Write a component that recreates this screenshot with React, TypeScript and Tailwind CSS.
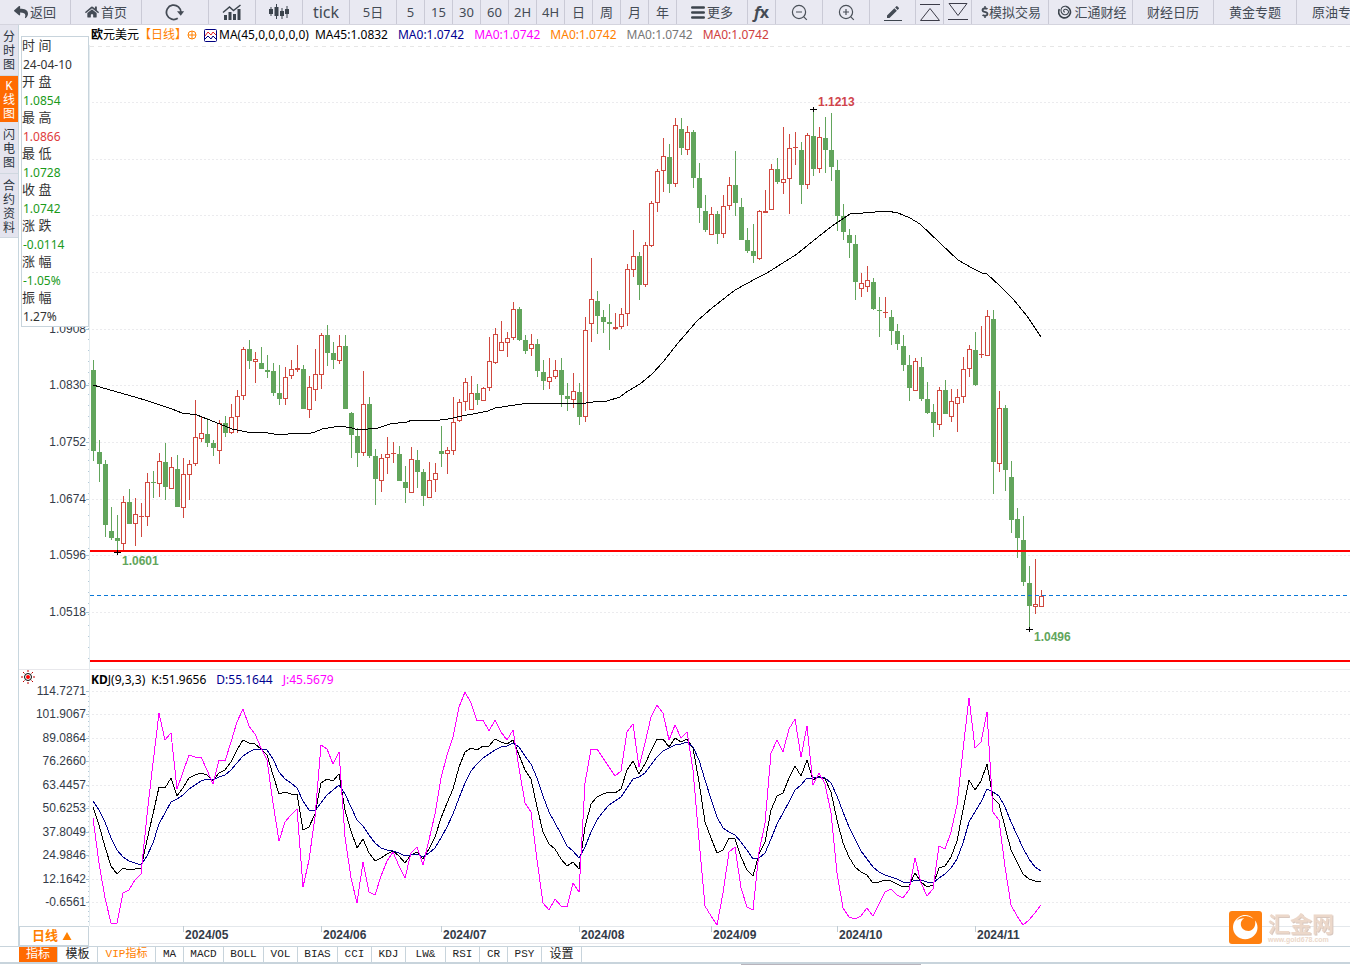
import React, { useState } from "react";
import { FaReply, FaHome, FaDollarSign } from "react-icons/fa";
import { MdEdit } from "react-icons/md";

// [rising, high, body top, body bottom, low]
type Candle = [number, number, number, number, number];

const STEP = 6;
const FIRST_X = 93;

const candles: Candle[] = [
  [0, 360, 370, 451, 461], [0, 440, 452, 464, 482], [0, 460, 464, 525, 537], [0, 507, 531, 538, 540],
  [0, 515, 538, 541, 552], [1, 496, 502, 544, 550], [0, 489, 502, 524, 524], [1, 498, 514, 524, 546],
  [1, 503, 516, 517, 537], [1, 473, 482, 517, 526], [0, 471, 482, 483, 498], [1, 453, 461, 484, 497],
  [0, 443, 462, 487, 500], [1, 457, 467, 489, 489], [0, 455, 469, 507, 507], [1, 458, 474, 508, 518],
  [1, 460, 464, 475, 500], [1, 400, 437, 464, 466], [1, 416, 433, 439, 442], [0, 418, 434, 443, 447],
  [0, 440, 443, 448, 456], [1, 420, 423, 451, 464], [0, 416, 423, 433, 437], [1, 404, 417, 433, 434],
  [1, 390, 396, 417, 433], [1, 347, 349, 396, 400], [0, 340, 349, 361, 369], [1, 352, 359, 362, 383],
  [0, 347, 363, 369, 369], [0, 355, 370, 372, 378], [0, 363, 371, 393, 396], [0, 365, 393, 399, 405],
  [1, 367, 377, 399, 405], [1, 360, 369, 376, 379], [1, 345, 368, 370, 372], [0, 365, 369, 409, 409],
  [1, 376, 387, 410, 418], [1, 349, 374, 390, 401], [1, 333, 335, 375, 389], [0, 325, 335, 353, 366],
  [0, 342, 353, 360, 369], [1, 335, 346, 361, 364], [0, 335, 346, 409, 409], [0, 412, 413, 435, 458],
  [0, 428, 436, 453, 467], [1, 371, 404, 453, 456], [0, 397, 404, 456, 458], [0, 449, 456, 479, 505],
  [1, 454, 458, 481, 492], [1, 437, 454, 458, 474], [1, 442, 453, 454, 463], [0, 446, 454, 481, 481],
  [0, 466, 482, 488, 503], [1, 447, 459, 493, 493], [0, 450, 460, 472, 488], [0, 469, 472, 496, 506],
  [1, 462, 480, 498, 498], [1, 463, 473, 480, 492], [0, 426, 451, 454, 467], [1, 447, 450, 454, 474],
  [1, 397, 422, 451, 455], [1, 399, 402, 421, 422], [1, 378, 382, 402, 411], [1, 376, 393, 410, 410],
  [0, 384, 393, 400, 405], [1, 387, 388, 401, 401], [1, 337, 361, 388, 391], [1, 328, 334, 363, 364],
  [1, 321, 342, 351, 351], [1, 332, 338, 343, 357], [1, 302, 309, 338, 340], [0, 307, 309, 340, 341],
  [0, 335, 340, 351, 354], [1, 334, 344, 349, 356], [0, 339, 344, 371, 377], [0, 360, 372, 381, 390],
  [1, 358, 377, 382, 389], [1, 360, 370, 377, 379], [0, 358, 370, 395, 407], [0, 383, 396, 399, 411],
  [1, 373, 391, 400, 408], [0, 383, 392, 417, 425], [1, 317, 330, 417, 422], [1, 258, 299, 324, 342],
  [0, 291, 301, 316, 334], [0, 310, 317, 322, 333], [0, 304, 322, 324, 350], [1, 313, 327, 329, 330],
  [1, 308, 314, 327, 329], [1, 264, 269, 314, 326], [1, 230, 256, 270, 277], [0, 252, 256, 285, 300],
  [1, 242, 245, 285, 287], [1, 201, 203, 246, 247], [1, 169, 171, 203, 212], [1, 138, 156, 171, 192],
  [0, 144, 157, 184, 193], [1, 118, 125, 184, 187], [0, 118, 129, 148, 155], [1, 126, 132, 150, 155],
  [0, 130, 132, 178, 188], [0, 163, 178, 208, 223], [0, 195, 211, 230, 232], [1, 207, 214, 235, 235],
  [0, 211, 214, 234, 244], [1, 195, 206, 234, 238], [1, 177, 185, 206, 210], [0, 151, 185, 203, 216],
  [0, 198, 207, 240, 240], [0, 228, 240, 251, 253], [0, 224, 251, 256, 263], [1, 210, 211, 259, 260],
  [1, 190, 211, 213, 213], [1, 164, 169, 210, 210], [0, 158, 169, 182, 184], [1, 127, 179, 183, 194],
  [1, 134, 148, 179, 214], [1, 132, 147, 148, 165], [0, 142, 150, 185, 204], [1, 133, 135, 185, 189],
  [0, 109, 136, 169, 176], [1, 127, 137, 169, 173], [0, 117, 138, 150, 173], [0, 113, 150, 167, 181],
  [0, 160, 170, 216, 231], [0, 204, 216, 232, 240], [0, 229, 235, 243, 258], [0, 235, 244, 282, 300],
  [1, 273, 283, 289, 297], [1, 266, 280, 287, 292], [0, 278, 282, 309, 310], [0, 297, 310, 311, 337],
  [1, 297, 312, 313, 318], [0, 310, 317, 331, 345], [0, 324, 331, 344, 350], [0, 335, 346, 365, 371],
  [0, 355, 365, 388, 401], [1, 358, 361, 391, 391], [0, 357, 367, 399, 401], [0, 382, 399, 413, 414],
  [0, 404, 412, 423, 437], [1, 387, 390, 425, 430], [0, 380, 390, 414, 414], [1, 389, 401, 417, 422],
  [1, 389, 397, 404, 432], [1, 357, 369, 397, 403], [1, 345, 349, 369, 377], [0, 332, 350, 385, 386],
  [1, 326, 354, 355, 358], [1, 310, 316, 356, 356], [0, 310, 319, 462, 494], [1, 391, 408, 464, 472],
  [0, 405, 408, 470, 491], [0, 461, 477, 520, 533], [0, 508, 519, 538, 558], [0, 516, 540, 582, 586],
  [0, 566, 583, 606, 629], [1, 559, 604, 607, 614], [1, 590, 596, 607, 607],
];

const ma45 =
  "93,385 100,387 117,392 135,397 148,401 172,409 182,413 197,415 207,419 220,424 232,429 247,432 268,433 280,435 297,433 307,434 315,432 322,429 340,426 352,428 358,430 368,429 378,428 390,424 407,422 412,420 425,420 433,421 448,419 462,416 473,414 488,411 495,408 515,405 530,403 563,403 568,404 573,403 580,404 593,402 607,401 620,397 628,391 640,384 652,374 663,362 678,343 697,321 712,308 735,290 757,278 767,273 797,254 813,241 832,226 850,214 863,213 887,211 898,213 910,218 920,224 940,243 958,260 972,268 982,273 987,274 1000,286 1013,299 1027,316 1041,337";

const kLine = [
  807, 825, 847, 866, 874, 868, 870, 869, 868, 840, 814, 787, 788, 778, 796, 788, 778, 775, 773, 775, 781, 773, 770, 762,
  750, 740, 743, 744, 749, 755, 775, 794, 792, 794, 794, 830, 827, 814, 783, 779, 781, 774, 810, 831, 848, 839, 853, 861,
  858, 854, 851, 856, 863, 855, 852, 859, 849, 837, 818, 803, 789, 767, 752, 748, 750, 746, 746, 739, 742, 744, 740, 755,
  770, 779, 807, 832, 844, 849, 859, 866, 862, 869, 827, 804, 797, 794, 792, 793, 789, 770, 761, 774, 764, 751, 739, 739,
  747, 738, 742, 739, 748, 782, 822, 838, 853, 850, 838, 839, 857, 870, 876, 854, 842, 810, 796, 793, 778, 766, 776, 760,
  780, 776, 779, 792, 820, 843, 857, 867, 872, 875, 883, 882, 880, 881, 884, 887, 886, 873, 882, 887, 885, 868, 866, 857,
  841, 810, 780, 790, 781, 764, 798, 804, 827, 850, 862, 874, 879, 881, 881,
];

const dLine = [
  801, 810, 822, 838, 850, 857, 861, 863, 865, 856, 843, 824, 813, 802, 799, 795, 789, 785, 781, 779, 780, 777, 775, 770,
  763, 756, 752, 749, 749, 750, 759, 772, 779, 783, 788, 801, 810, 811, 803, 795, 790, 785, 794, 807, 820, 826, 835, 843,
  848, 850, 851, 853, 856, 855, 854, 857, 853, 848, 838, 827, 814, 798, 783, 771, 764, 758, 754, 750, 747, 746, 743, 747,
  756, 764, 778, 796, 812, 823, 834, 846, 851, 858, 847, 832, 820, 812, 805, 801, 797, 788, 779, 777, 773, 765, 757, 751,
  748, 745, 744, 742, 747, 760, 780, 799, 817, 828, 832, 835, 842, 850, 859, 858, 853, 839, 824, 813, 802, 790, 785, 778,
  778, 777, 778, 783, 796, 812, 827, 839, 851, 859, 867, 872, 875, 877, 879, 882, 883, 880, 880, 882, 883, 878, 874, 868,
  859, 843, 822, 812, 802, 789, 792, 796, 807, 822, 835, 848, 859, 867, 871,
];

const jLine = [
  818, 863, 898, 923, 923, 893, 890, 880, 874, 815, 763, 713, 740, 733, 789, 772, 755, 757, 757, 770, 784, 760, 761, 742,
  722, 709, 726, 734, 748, 760, 803, 841, 822, 815, 809, 887, 860, 817, 745, 749, 764, 752, 837, 878, 903, 862, 892, 895,
  876, 861, 852, 866, 878, 853, 847, 865, 840, 814, 778, 755, 737, 707, 692, 703, 721, 720, 731, 720, 732, 740, 730, 768,
  803, 812, 860, 903, 910, 899, 906, 907, 883, 892, 783, 749, 749, 758, 767, 776, 771, 732, 724, 767, 743, 717, 705, 713,
  740, 725, 738, 732, 770, 840, 906, 916, 925, 893, 852, 847, 888, 907, 910, 852, 823, 753, 740, 752, 729, 719, 757, 726,
  785, 773, 784, 813, 873, 908, 917, 919, 916, 908, 916, 904, 892, 889, 895, 898, 890, 858, 883, 896, 889, 846, 849, 832,
  805, 750, 698, 748, 742, 712, 812, 820, 867, 905, 916, 925, 920, 913, 905,
];

const priceTicks: [number, string][] = [
  [102, ""], [159, ""], [215, ""], [272, ""], [329, "1.0908"], [385, "1.0830"],
  [442, "1.0752"], [499, "1.0674"], [555, "1.0596"], [612, "1.0518"],
];

const kdjTicks: [number, string][] = [
  [691, "114.7271"], [714, "101.9067"], [738, "89.0864"], [761, "76.2660"], [785, "63.4457"],
  [808, "50.6253"], [832, "37.8049"], [855, "24.9846"], [879, "12.1642"], [902, "-0.6561"],
];

const months: [number, string][] = [
  [183, "2024/05"], [321, "2024/06"], [441, "2024/07"], [579, "2024/08"],
  [711, "2024/09"], [837, "2024/10"], [975, "2024/11"],
];

const quote = [
  { label: "时 间", value: "24-04-10", color: "text-[#333]" },
  { label: "开 盘", value: "1.0854", color: "text-[#1a9a1a]" },
  { label: "最 高", value: "1.0866", color: "text-[#e03c3c]" },
  { label: "最 低", value: "1.0728", color: "text-[#1a9a1a]" },
  { label: "收 盘", value: "1.0742", color: "text-[#1a9a1a]" },
  { label: "涨 跌", value: "-0.0114", color: "text-[#1a9a1a]" },
  { label: "涨 幅", value: "-1.05%", color: "text-[#1a9a1a]" },
  { label: "振 幅", value: "1.27%", color: "text-[#333]" },
];

const sideTabs = [
  { name: "分时图", height: "h-[51px]" },
  { name: "K线图", height: "h-[46px]" },
  { name: "闪电图", height: "h-[52px]" },
  { name: "合约资料", height: "h-16" },
];

const indicatorTabs = [
  { name: "指标", width: "w-[39px]" },
  { name: "模板", width: "w-10" },
  { name: "VIP指标", width: "w-[58px]" },
  { name: "MA", width: "w-7" },
  { name: "MACD", width: "w-10" },
  { name: "BOLL", width: "w-10" },
  { name: "VOL", width: "w-[34px]" },
  { name: "BIAS", width: "w-10" },
  { name: "CCI", width: "w-[34px]" },
  { name: "KDJ", width: "w-[34px]" },
  { name: "LW&", width: "w-10" },
  { name: "RSI", width: "w-[34px]" },
  { name: "CR", width: "w-7" },
  { name: "PSY", width: "w-[34px]" },
  { name: "设置", width: "w-10" },
];

const toPoints = (values: number[]) => values.map((y, i) => `${FIRST_X + i * STEP},${y}`).join(" ");

//1 Toolbar icons
const RefreshIcon = () => (
  <svg width="20" height="18" viewBox="0 0 18 16" fill="none" stroke="#444b55" strokeWidth="1.6">
    <path d="M11.5 13.6A6.5 6.5 0 1 1 14.3 8.5" />
    <path d="M10.8 7.4h6.4L14.2 11.4z" fill="#444b55" stroke="none" />
  </svg>
);

const TrendIcon = () => (
  <svg width="20" height="16" viewBox="0 0 20 16" fill="#3c444d">
    <path d="M2 11h3v5H2zM6.500 8h3v8h-3zM11 10h3v6h-3zM15.500 5h3v11h-3z" />
    <path d="M1 8.500 7.500 3l4 3.500L18.500 1" fill="none" stroke="#3c444d" strokeWidth="1.500" />
  </svg>
);

const CandleIcon = () => (
  <svg width="22" height="16" viewBox="0 0 22 16" fill="#3c444d">
    <path d="M1 5h4v5H1zM6.500 3h4v9h-4zM12 7h4v5h-4zM17 5h4v5h-4z" />
    <path d="M3 3v9M8.500 0v15M14 4v11M19 2v12" stroke="#3c444d" strokeWidth="1" />
  </svg>
);

const MenuIcon = () => (
  <svg width="14" height="13" viewBox="0 0 14 13" fill="none" stroke="#3c444d" strokeWidth="2.400" strokeLinecap="round">
    <path d="M1.200 1.500h11.600M1.200 6.500h11.600M1.200 11.500h11.600" />
  </svg>
);

const ZoomIcon = ({ plus }: { plus?: boolean }) => (
  <svg width="17" height="17" viewBox="0 0 17 17" fill="none" stroke="#4a5058" strokeWidth="1.200">
    <circle cx="8" cy="8" r="6.600" />
    <path d="M5 8h6M12.800 12.800l3 3" />
    {plus && <path d="M8 5v6" />}
  </svg>
);

const CollapseIcon = ({ down }: { down?: boolean }) => (
  <svg width="20" height="18" viewBox="0 0 20 18" fill="none" stroke="#3c3c48" strokeWidth="1">
    {down ? <path d="M1 .500h18L10 12.500zM0 16.500h20" /> : <path d="M0 1.500h20M10 5.500l9.500 12H.500z" />}
  </svg>
);

const SwirlIcon = () => (
  <svg width="14" height="14" viewBox="0 0 15 15" fill="none" stroke="#3c444d">
    <path d="M1.500 4.500A6.300 6.300 0 1 0 8 1.300" strokeWidth="1.800" />
    <path d="M8 1.300C4 1 2.500 4.500 3.500 7.500S8.500 11.500 10.500 9.300 10.500 4.800 8 4.600 5.500 7 7.300 7.800" strokeWidth="1.100" />
  </svg>
);

const toolbar: { id: string; width: string; content: React.ReactNode }[] = [
  { id: "返回", width: "w-[71px]", content: <><FaReply size={14} />返回</> },
  { id: "首页", width: "w-[71px]", content: <><FaHome size={14} />首页</> },
  { id: "刷新", width: "w-[67px]", content: <RefreshIcon /> },
  { id: "走势", width: "w-[47px]", content: <TrendIcon /> },
  { id: "K线", width: "w-[47px]", content: <CandleIcon /> },
  { id: "tick", width: "w-[47px]", content: <span className="text-base">tick</span> },
  { id: "5日", width: "w-[47px]", content: "5日" },
  { id: "5", width: "w-7", content: "5" },
  { id: "15", width: "w-7", content: "15" },
  { id: "30", width: "w-7", content: "30" },
  { id: "60", width: "w-7", content: "60" },
  { id: "2H", width: "w-7", content: "2H" },
  { id: "4H", width: "w-7", content: "4H" },
  { id: "日", width: "w-7", content: "日" },
  { id: "周", width: "w-7", content: "周" },
  { id: "月", width: "w-7", content: "月" },
  { id: "年", width: "w-7", content: "年" },
  { id: "更多", width: "w-[71px]", content: <><MenuIcon />更多</> },
  { id: "公式", width: "w-7", content: <b className="text-base leading-none"><i>f</i>x</b> },
  { id: "缩小", width: "w-[47px]", content: <ZoomIcon /> },
  { id: "放大", width: "w-[47px]", content: <ZoomIcon plus /> },
  { id: "画线", width: "w-[46px]", content: <span className="border-b border-[#3c444d] px-px"><MdEdit size={16} /></span> },
  { id: "展开", width: "w-7", content: <CollapseIcon /> },
  { id: "收起", width: "w-7", content: <CollapseIcon down /> },
  { id: "模拟交易", width: "w-[77px]", content: <><FaDollarSign size={12} className="-mr-1" />模拟交易</> },
  { id: "汇通财经", width: "w-[84px]", content: <span className="flex items-center gap-0.5 pl-1"><SwirlIcon />汇通财经</span> },
  { id: "财经日历", width: "w-[81px]", content: "财经日历" },
  { id: "黄金专题", width: "w-[83px]", content: "黄金专题" },
  { id: "原油专题", width: "w-[83px]", content: "原油专题" },
];

const Toolbar = () => (
  <nav className="flex h-[25px] overflow-hidden border-b border-[#d4d4de] bg-[#e9e9f2]">
    {toolbar.map((item) => (
      <button
        key={item.id}
        aria-label={item.id}
        className={`${item.width} flex shrink-0 items-center justify-center gap-0.5 border-r border-[#cacad6] text-[13px] leading-none whitespace-nowrap text-[#444b55]`}
      >
        {item.content}
      </button>
    ))}
  </nav>
);

const Sidebar = () => {
  const [active, setActive] = useState("K线图");
  return (
    <aside className="w-[19px] shrink-0 border-r border-[#c8d6de]">
      {sideTabs.map((tab) => (
        <button
          key={tab.name}
          onClick={() => setActive(tab.name)}
          className={`${tab.height} flex w-[18px] flex-col items-center justify-center border-b pt-1 font-['Liberation_Mono','Noto_Sans_CJK_SC',monospace] text-xs leading-[14px] ${
            active === tab.name ? "border-[#ff6a00] bg-[#ff6a00] text-white" : "border-[#d0d8e0] bg-[#e4e4ee] text-[#2c3440]"
          }`}
        >
          {tab.name.split("").map((char) => (
            <span key={char} className="h-3.5">{char}</span>
          ))}
        </button>
      ))}
    </aside>
  );
};

const QuotePanel = () => (
  <dl className="absolute top-[11px] left-0.5 w-[68px] border border-[#c8d4dc] bg-white pb-px text-xs">
    {quote.map((row) => (
      <React.Fragment key={row.label}>
        <dt className="h-[17px] text-[13px] leading-[17px] text-[#333]">{row.label}</dt>
        <dd className={`h-[19px] pl-px leading-[21px] ${row.color}`}>{row.value}</dd>
      </React.Fragment>
    ))}
  </dl>
);

const Tick = ({ y, label }: { y: number; label: string }) => (
  <g>
    <rect x="90" y={y} width="100%" height="1" fill="url(#dots)" />
    {label && (
      <>
        <rect x="86" y={y} width="3" height="1" fill="#a8c4d4" />
        <text x="86" y={y + 4} textAnchor="end" fontSize="12" fill="#333b48">
          {label}
        </text>
      </>
    )}
  </g>
);

const CandleBar = ({ candle, x }: { candle: Candle; x: number }) => {
  const [rising, high, top, bottom, low] = candle;
  const color = rising ? "#d0483f" : "#62a55c";
  return (
    <g>
      <rect x={x} y={high} width="1" height={low - high} fill={color} />
      <rect x={x - 2} y={top} width="5" height={bottom - top} fill={color} />
      {rising === 1 && bottom - top > 2 && <rect x={x - 1} y={top + 1} width="3" height={bottom - top - 2} fill="#fff" />}
    </g>
  );
};

const Marker = ({ x, y, color, textY, label }: { x: number; y: number; color: string; textY: number; label: string }) => (
  <g>
    <path d={`M${x - 3} ${y}h7v1h-7zM${x} ${y - 2}h1v5h-1z`} fill="#000" />
    <text x={x + 5} y={textY} fontSize="12" fontWeight="bold" fill={color}>
      {label}
    </text>
  </g>
);

const PriceChart = () => (
  <svg className="block h-[624px] w-full font-['Liberation_Sans',sans-serif]" shapeRendering="crispEdges">
    <defs>
      <pattern id="dots" width="4" height="4" patternUnits="userSpaceOnUse">
        <rect width="2" height="4" fill="#ebebee" />
      </pattern>
    </defs>
    <g transform="translate(-19 -45)">
      <line x1="89" y1="45" x2="89" y2="669" stroke="#e4ecf0" />
      <line x1="88" y1="328" x2="88" y2="669" stroke="#b4cad8" strokeDasharray="1 10" />
      <line x1="90" y1="46" x2="200%" y2="46" stroke="#e6e6e6" strokeDasharray="4 4" />
      {priceTicks.map(([y, label]) => (
        <Tick key={y} y={y} label={label} />
      ))}
      {candles.map((candle, i) => (
        <CandleBar key={i} candle={candle} x={FIRST_X + i * STEP} />
      ))}
      <polyline points={ma45} fill="none" stroke="#000" />
      <rect x="90" y="550" width="100%" height="2" fill="#f00" />
      <rect x="90" y="660" width="100%" height="2" fill="#f00" />
      <line x1="90" y1="595.5" x2="200%" y2="595.5" stroke="#0a78d8" strokeDasharray="4 3" />
      <Marker x={813} y={109} textY={106} color="#d0444c" label="1.1213" />
      <Marker x={117} y={552} textY={565} color="#62a55c" label="1.0601" />
      <Marker x={1029} y={629} textY={641} color="#62a55c" label="1.0496" />
    </g>
  </svg>
);

const KdjChart = () => (
  <svg className="block h-[236px] w-full overflow-visible font-['Liberation_Sans',sans-serif]" shapeRendering="crispEdges">
    <g transform="translate(-19 -690)">
      <line x1="89" y1="670" x2="89" y2="926" stroke="#e4ecf0" />
      <line x1="88" y1="691" x2="88" y2="926" stroke="#b4cad8" strokeDasharray="1 4" />
      {kdjTicks.map(([y, label]) => (
        <Tick key={y} y={y} label={label} />
      ))}
      <g fill="none">
        <polyline points={toPoints(kLine)} stroke="#000" />
        <polyline points={toPoints(dLine)} stroke="#00008b" />
        <polyline points={toPoints(jLine)} stroke="#f0f" />
      </g>
    </g>
  </svg>
);

const DateAxis = () => (
  <div className="flex h-5">
    <button className="flex w-[70px] items-center gap-1 border border-[#c8d4dc] pl-3 text-[13px] font-bold text-[#ff8000]">
      日线
      <svg width="10" height="8" viewBox="0 0 9 8" fill="#ff8000">
        <path d="M4.500 0 9 8H0z" />
      </svg>
    </button>
    <svg className="h-5 flex-1 font-['Liberation_Sans',sans-serif]" shapeRendering="crispEdges">
      <g transform="translate(-89 0)">
        <rect x="90" y="0" width="100%" height="1" fill="#e4e8ec" />
        <rect x="139" y="17" width="661" height="1" fill="#e8e8ec" />
        {months.map(([x, label]) => (
          <g key={label}>
            <rect x={x} y="0" width="1" height="6" fill="#c0ccd4" />
            <text x={x + 2} y="13" fontSize="12" fontWeight="bold" fill="#333b48">
              {label}
            </text>
          </g>
        ))}
      </g>
    </svg>
  </div>
);

const IndicatorTabs = () => {
  const [active, setActive] = useState("指标");
  return (
    <div className="flex h-[18px] border-t border-b-2 border-[#c8d4dc] pl-[19px]">
      {indicatorTabs.map((tab) => (
        <button
          key={tab.name}
          onClick={() => setActive(tab.name)}
          className={`${tab.width} flex items-center justify-center border-r border-[#c8d4dc] font-['Liberation_Mono','Noto_Sans_CJK_SC',monospace] text-[11px] leading-none ${
            active === tab.name ? "bg-[#ff6a00] text-white" : tab.name === "VIP指标" ? "text-[#ff8000]" : "text-[#222]"
          }`}
        >
          {/[A-Z]/.test(tab.name) ? tab.name : <span className="text-xs leading-none">{tab.name}</span>}
        </button>
      ))}
    </div>
  );
};

const Watermark = () => (
  <div className="absolute right-4 bottom-0.5 flex items-center gap-1.5">
    <svg width="33" height="33" viewBox="0 0 33 33">
      <rect width="33" height="33" rx="3" fill="#ff8010" />
      <path
        fill="#fff"
        d="M13 4.500C7.500 6.500 4 11 4 16.500 4 23 9.500 28.300 16.200 28.300S28.500 23 28.500 16.800c0-3-.800-5.200-2.500-7.200 1.200 5.700-1.800 10.400-6.500 10.400-4.500 0-7.700-3-7.700-7 0-2.500 1.200-4.500 3.500-5.800C12.500 7 9.500 8 7.500 10 9.500 6.500 13.500 4.700 18 5.200c2.500.300 4.800 1.300 6.500 2.800C22 5 17.500 3.200 13 4.500z"
      />
    </svg>
    <div className="text-[#ecd8ca]">
      <div className="text-[22px] leading-[26px] font-bold drop-shadow-[1px_1px_0_#d8c8c0]">汇金网</div>
      <div className="font-['Liberation_Sans',sans-serif] text-[7px] leading-2 font-bold">www.gold678.com</div>
    </div>
  </div>
);

const App = () => {
  return (
    <div className="min-h-screen overflow-hidden bg-white font-['Noto_Sans','Noto_Sans_CJK_SC',sans-serif]">
      <Toolbar />

      {/*// - Sidebar and charts */}
      <div className="flex">
        <Sidebar />
        <main className="relative min-w-0 flex-1">
          <div className="flex h-5 items-center gap-2.5 pl-[72px] text-xs leading-none whitespace-nowrap text-black">
            <div className="flex items-center">
              <span className="font-bold">欧</span>元美元
              <span className="text-[#ff8000]">【日线】</span>
              <svg width="10" height="10" viewBox="0 0 10 10" fill="none" stroke="#ff8000">
                <circle cx="5" cy="5" r="4" />
                <path d="M1 5h8M5 1v8" />
              </svg>
              <svg width="13" height="13" viewBox="0 0 13 13" fill="none" className="mr-0.5 ml-[7px]">
                <rect x=".5" y=".5" width="12" height="12" rx="1" stroke="#000080" />
                <path d="M1 7l3-4 3 3 2-3 3 3" stroke="#e02020" />
                <path d="M1 10l3-3 3 3 2-3 3 3" stroke="#000080" />
              </svg>
              <span className="mr-1.5">MA(45,0,0,0,0,0)</span>
              <span>MA45:1.0832</span>
            </div>
            <span className="text-[#000090]">MA0:1.0742</span>
            <span className="text-[#f0f]">MA0:1.0742</span>
            <span className="text-[#ff8000]">MA0:1.0742</span>
            <span className="text-[#777]">MA0:1.0742</span>
            <span className="text-[#d04040]">MA0:1.0742</span>
          </div>
          <PriceChart />

          {/*// - KDJ */}
          <div className="flex h-[21px] items-center gap-2.5 border-t border-[#e8e8ec] pl-0.5 text-xs leading-none text-black">
            <svg width="14" height="14" viewBox="0 0 14 14" className="mr-[46px] self-start">
              <circle cx="7" cy="7" r="3.500" fill="#fff" stroke="#000" />
              <circle cx="7" cy="7" r="2" fill="#f00" />
              <path
                d="M7 0v2M7 12v2M0 7h2M12 7h2M2 2l1.500 1.500M10.500 10.500 12 12M12 2l-1.500 1.500M3.500 10.500 2 12"
                stroke="#c00000"
              />
            </svg>
            <div className="flex gap-1.5">
              <span><b>KD</b>J(9,3,3)</span>
              <span>K:51.9656</span>
            </div>
            <span className="text-[#000090]">D:55.1644</span>
            <span className="text-[#f0f]">J:45.5679</span>
          </div>
          <KdjChart />
          <DateAxis />
          <QuotePanel />
          <Watermark />
        </main>
      </div>

      {/*// - Indicators */}
      <IndicatorTabs />
      <div className="flex justify-center pl-[312px]">
        <div className="h-1 w-[180px] bg-[#b8b4bc]" />
      </div>
    </div>
  );
};

export default App;
